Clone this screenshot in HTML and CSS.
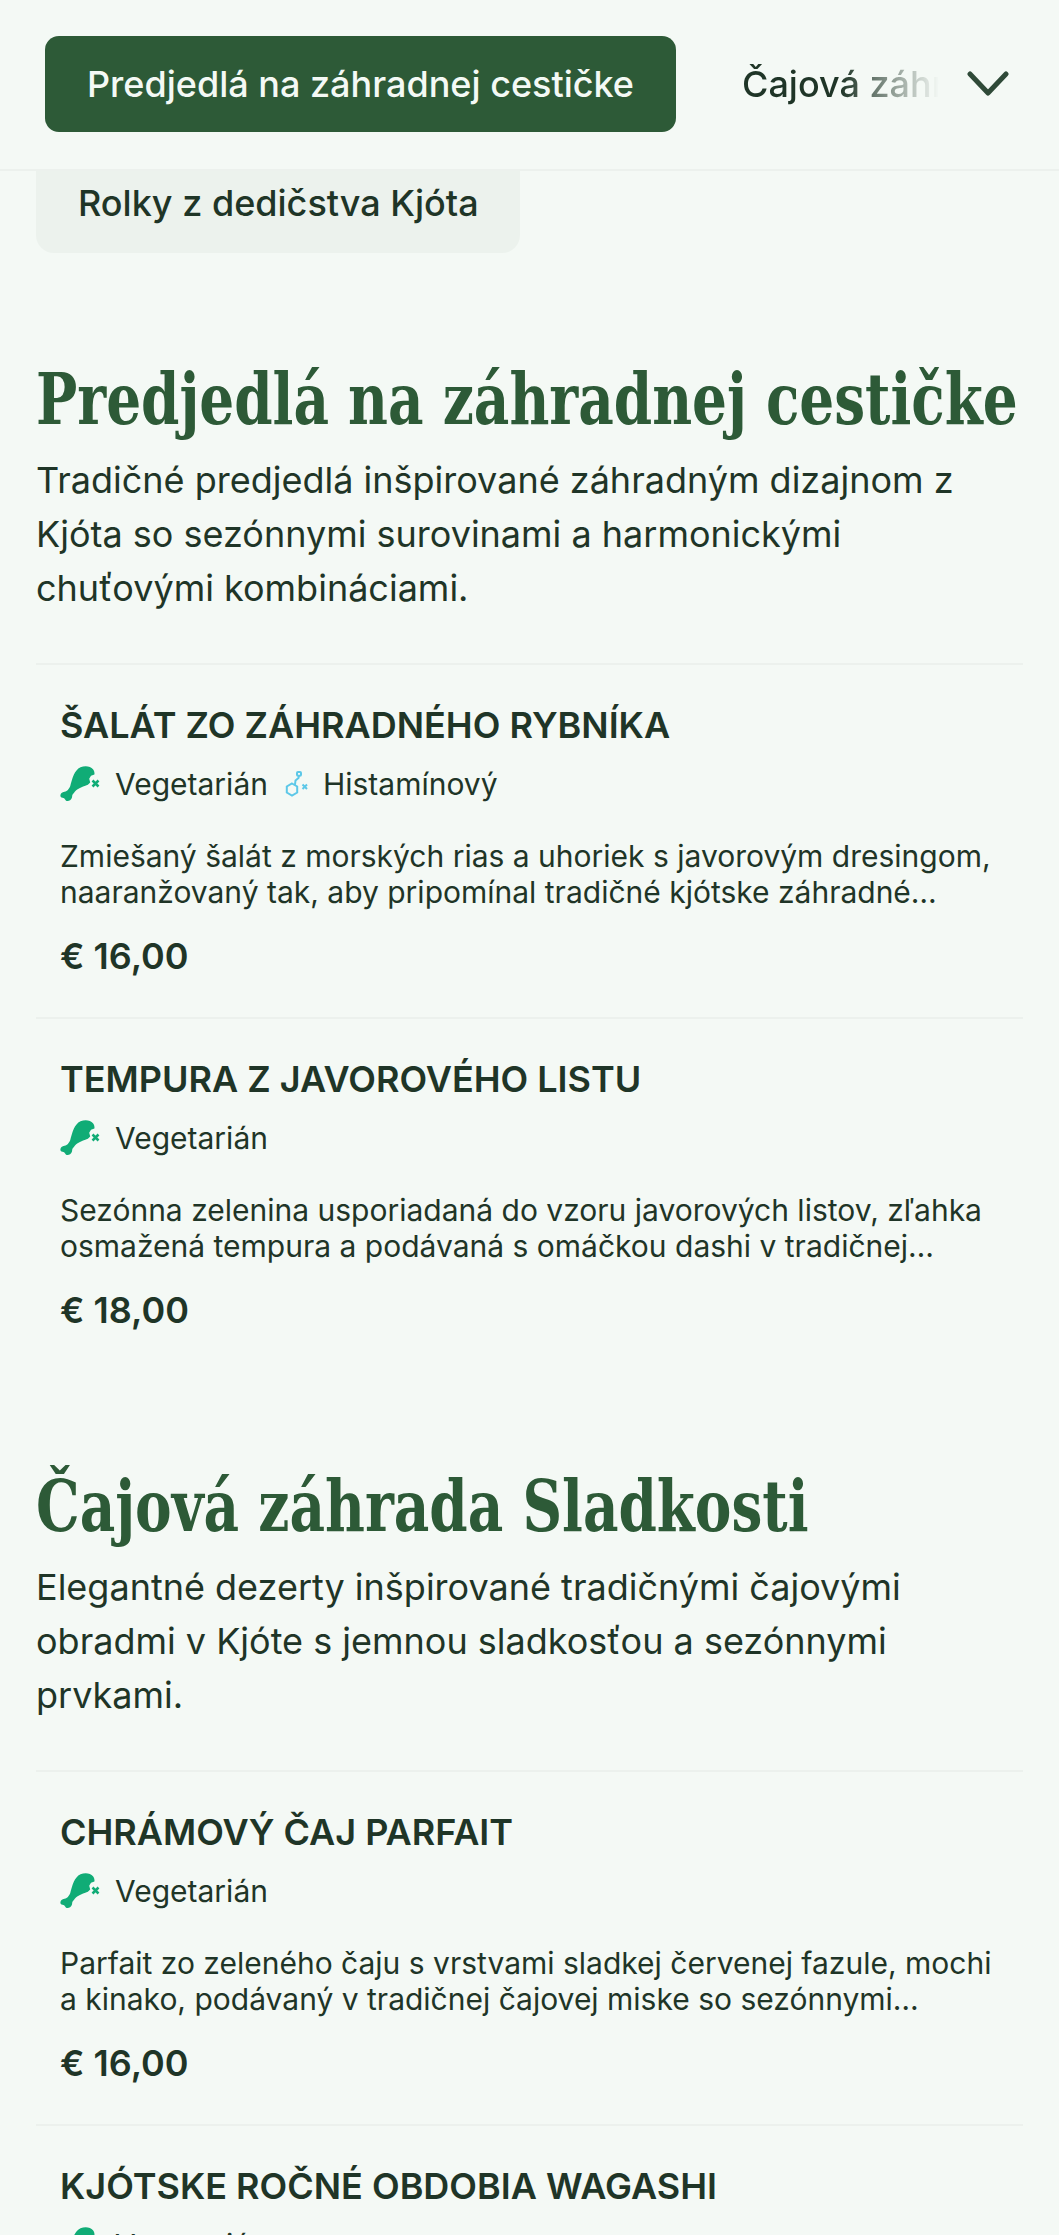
FILE: index.html
```html
<!DOCTYPE html>
<html lang="sk">
<head>
<meta charset="utf-8">
<title>Menu</title>
<link rel="stylesheet" href="styles.css">
</head>
<body>
<svg class="defs" width="0" height="0" aria-hidden="true">
  <symbol id="no-meat" viewBox="0 0 40 36">
    <path d="M20.5 1.2C25-.6 30.500 0 33 3.200c1.300 1.700 1.700 3.700 1.400 5.300l-3.400 1.300-1.800 3 1 3.800-2.300 2.200c-3.500 1.600-7.300 2.500-10.300 4.500-2 1.400-3.300 3.200-4.800 5-.9 1.100-.4 2.400-1 3.700-.9 2.300-3.300 3.500-5.200 2.900-1.200-.4-1.400-1.600-2.200-2.400-1-.9-2.900-.5-3.700-1.800-.8-1.500 0-3.400 1.700-4.300 1.400-.8 2.900-.4 4.100-1.300 1.600-1.200 2.700-3 3.700-4.900C12.100 13 14.300 4 20.500 1.200z"/>
    <path class="cross" d="M32.500 14.500l6 6m0-6l-6 6"/>
  </symbol>
  <symbol id="no-histamine" viewBox="0 0 24 26">
    <path class="ring" d="M7 12.500l5.200 3v6L7 24.500l-5.200-3v-6zM10 13.500l.5-4 3-2.500.5-2.500"/>
    <rect class="ring" x="12" y="1" width="4" height="3.800" rx="1"/>
    <path class="ring-x" d="M17.500 13.500l4.500 4.500m0-4.500l-4.500 4.500"/>
  </symbol>
</svg>

<header class="topbar">
  <nav class="tabs">
    <a class="tab tab-active">Predjedlá na záhradnej cestičke</a>
    <span class="tab-fade"><a class="tab">Čajová záhrada Sladkosti</a></span>
  </nav>
  <svg class="chevron" viewBox="0 0 42 26"><path d="M3 3l18 19L39 3"/></svg>
</header>

<main class="page">
  <a class="prev-tab">Rolky z dedičstva Kjóta</a>

  <section class="section">
    <h2 class="section-title">Predjedlá na záhradnej cestičke</h2>
    <p class="section-desc">Tradičné predjedlá inšpirované záhradným dizajnom z Kjóta so sezónnymi surovinami a harmonickými chuťovými kombináciami.</p>

    <article class="dish">
      <h3 class="dish-name">Šalát zo záhradného rybníka</h3>
      <div class="tags">
        <svg class="icon-meat"><use href="#no-meat"/></svg><span class="tag">Vegetarián</span>
        <svg class="icon-hist"><use href="#no-histamine"/></svg><span class="tag">Histamínový</span>
      </div>
      <p class="dish-desc">Zmiešaný šalát z morských rias a uhoriek s javorovým dresingom, naaranžovaný tak, aby pripomínal tradičné kjótske záhradné jazierka s jemnými kvetmi.</p>
      <div class="price">€ 16,00</div>
    </article>

    <article class="dish">
      <h3 class="dish-name">Tempura z javorového listu</h3>
      <div class="tags">
        <svg class="icon-meat"><use href="#no-meat"/></svg><span class="tag">Vegetarián</span>
      </div>
      <p class="dish-desc">Sezónna zelenina usporiadaná do vzoru javorových listov, zľahka osmažená tempura a podávaná s omáčkou dashi v tradičnej kjótskej keramike a so soľou.</p>
      <div class="price">€ 18,00</div>
    </article>
  </section>

  <section class="section">
    <h2 class="section-title">Čajová záhrada Sladkosti</h2>
    <p class="section-desc">Elegantné dezerty inšpirované tradičnými čajovými obradmi v Kjóte s jemnou sladkosťou a sezónnymi prvkami.</p>

    <article class="dish">
      <h3 class="dish-name">Chrámový čaj parfait</h3>
      <div class="tags">
        <svg class="icon-meat"><use href="#no-meat"/></svg><span class="tag">Vegetarián</span>
      </div>
      <p class="dish-desc">Parfait zo zeleného čaju s vrstvami sladkej červenej fazule, mochi a kinako, podávaný v tradičnej čajovej miske so sezónnymi ovocnými plodmi a medom.</p>
      <div class="price">€ 16,00</div>
    </article>

    <article class="dish">
      <h3 class="dish-name">Kjótske ročné obdobia wagashi</h3>
      <div class="tags">
        <svg class="icon-meat"><use href="#no-meat"/></svg><span class="tag">Vegetarián</span>
      </div>
    </article>
  </section>
</main>
</body>
</html>
```
FILE: styles.css
```css
* { box-sizing: border-box; }
html, body { margin: 0; height: 2235px; overflow: hidden; }
body {
  background: #f4f9f5;
  color: #1f3527;
  font-family: Inter, "Liberation Sans", sans-serif;
}
.defs { position: absolute; }

.topbar {
  position: relative;
  z-index: 2;
  height: 171px;
  display: flex;
  align-items: center;
  padding: 0 50px 2px 45px;
  background: #f4f9f5;
  border-bottom: 2px solid #ecf1ed;
}
.tabs { flex: 1; display: flex; align-items: center; gap: 66px; min-width: 0; }
.tab { font-size: 36px; line-height: 44px; white-space: nowrap; }
.tab-active {
  flex: none;
  width: 631px;
  height: 96px;
  display: flex;
  align-items: center;
  justify-content: center;
  color: #f4f9f5;
  background: #2d5a37;
  border-radius: 14px;
  font-weight: 500;
}
.tab-fade {
  width: 197px;
  overflow: hidden;
  font-weight: 500;
  -webkit-mask-image: linear-gradient(to right, #000 50%, transparent 100%);
  mask-image: linear-gradient(to right, #000 50%, transparent 100%);
}
.chevron { flex: none; width: 42px; height: 26px; }
.chevron path { fill: none; stroke: #2f4a38; stroke-width: 5; stroke-linecap: round; stroke-linejoin: round; }

.page { padding: 0 36px; }
.prev-tab {
  display: block;
  width: 484px;
  height: 112px;
  margin-top: -30px;
  padding: 40px 0 0 42px;
  background: #ecf2ed;
  border-radius: 18px;
  font-size: 36px;
  line-height: 44px;
  font-weight: 500;
}

.section { padding-top: 107px; }
.section + .section { padding-top: 96px; }
.section-title {
  margin: 0;
  color: #2d5a37;
  font-family: "DejaVu Serif Condensed", "DejaVu Serif", serif;
  font-stretch: condensed;
  font-size: 61px;
  line-height: 86px;
  font-weight: 700;
  white-space: nowrap;
  transform: scaleY(1.18);
  transform-origin: 0 65px;
}
.section-desc {
  margin: 7px 0 0;
  width: 980px;
  font-size: 36px;
  line-height: 54px;
}
.dish {
  padding: 38px 24px 0;
  height: 354px;
  border-top: 2px solid #ecf1ed;
}
.section-desc + .dish { margin-top: 48px; }
.dish-name {
  margin: 0;
  font-size: 36px;
  line-height: 44px;
  font-weight: 600;
  text-transform: uppercase;
}
.tags { display: flex; align-items: center; height: 40px; margin-top: 17px; }
.icon-meat { width: 40px; height: 36px; margin-right: 15px; }
.icon-hist { width: 24px; height: 26px; margin: 0 14px 0 17px; }
#no-meat { fill: #10ac76; }
.cross { fill: none; stroke: #10ac76; stroke-width: 2.500; }
.ring { fill: none; stroke: #5cc8e8; stroke-width: 2; }
.ring-x { fill: none; stroke: #5cc8e8; stroke-width: 2; }
.tag { font-size: 30px; line-height: 40px; }
.dish-desc {
  margin: 34px 0 0;
  font-size: 30px;
  line-height: 36px;
  display: -webkit-box;
  -webkit-line-clamp: 2;
  -webkit-box-orient: vertical;
  overflow: hidden;
}
.price { margin-top: 24px; font-size: 36px; line-height: 44px; font-weight: 600; }
```
